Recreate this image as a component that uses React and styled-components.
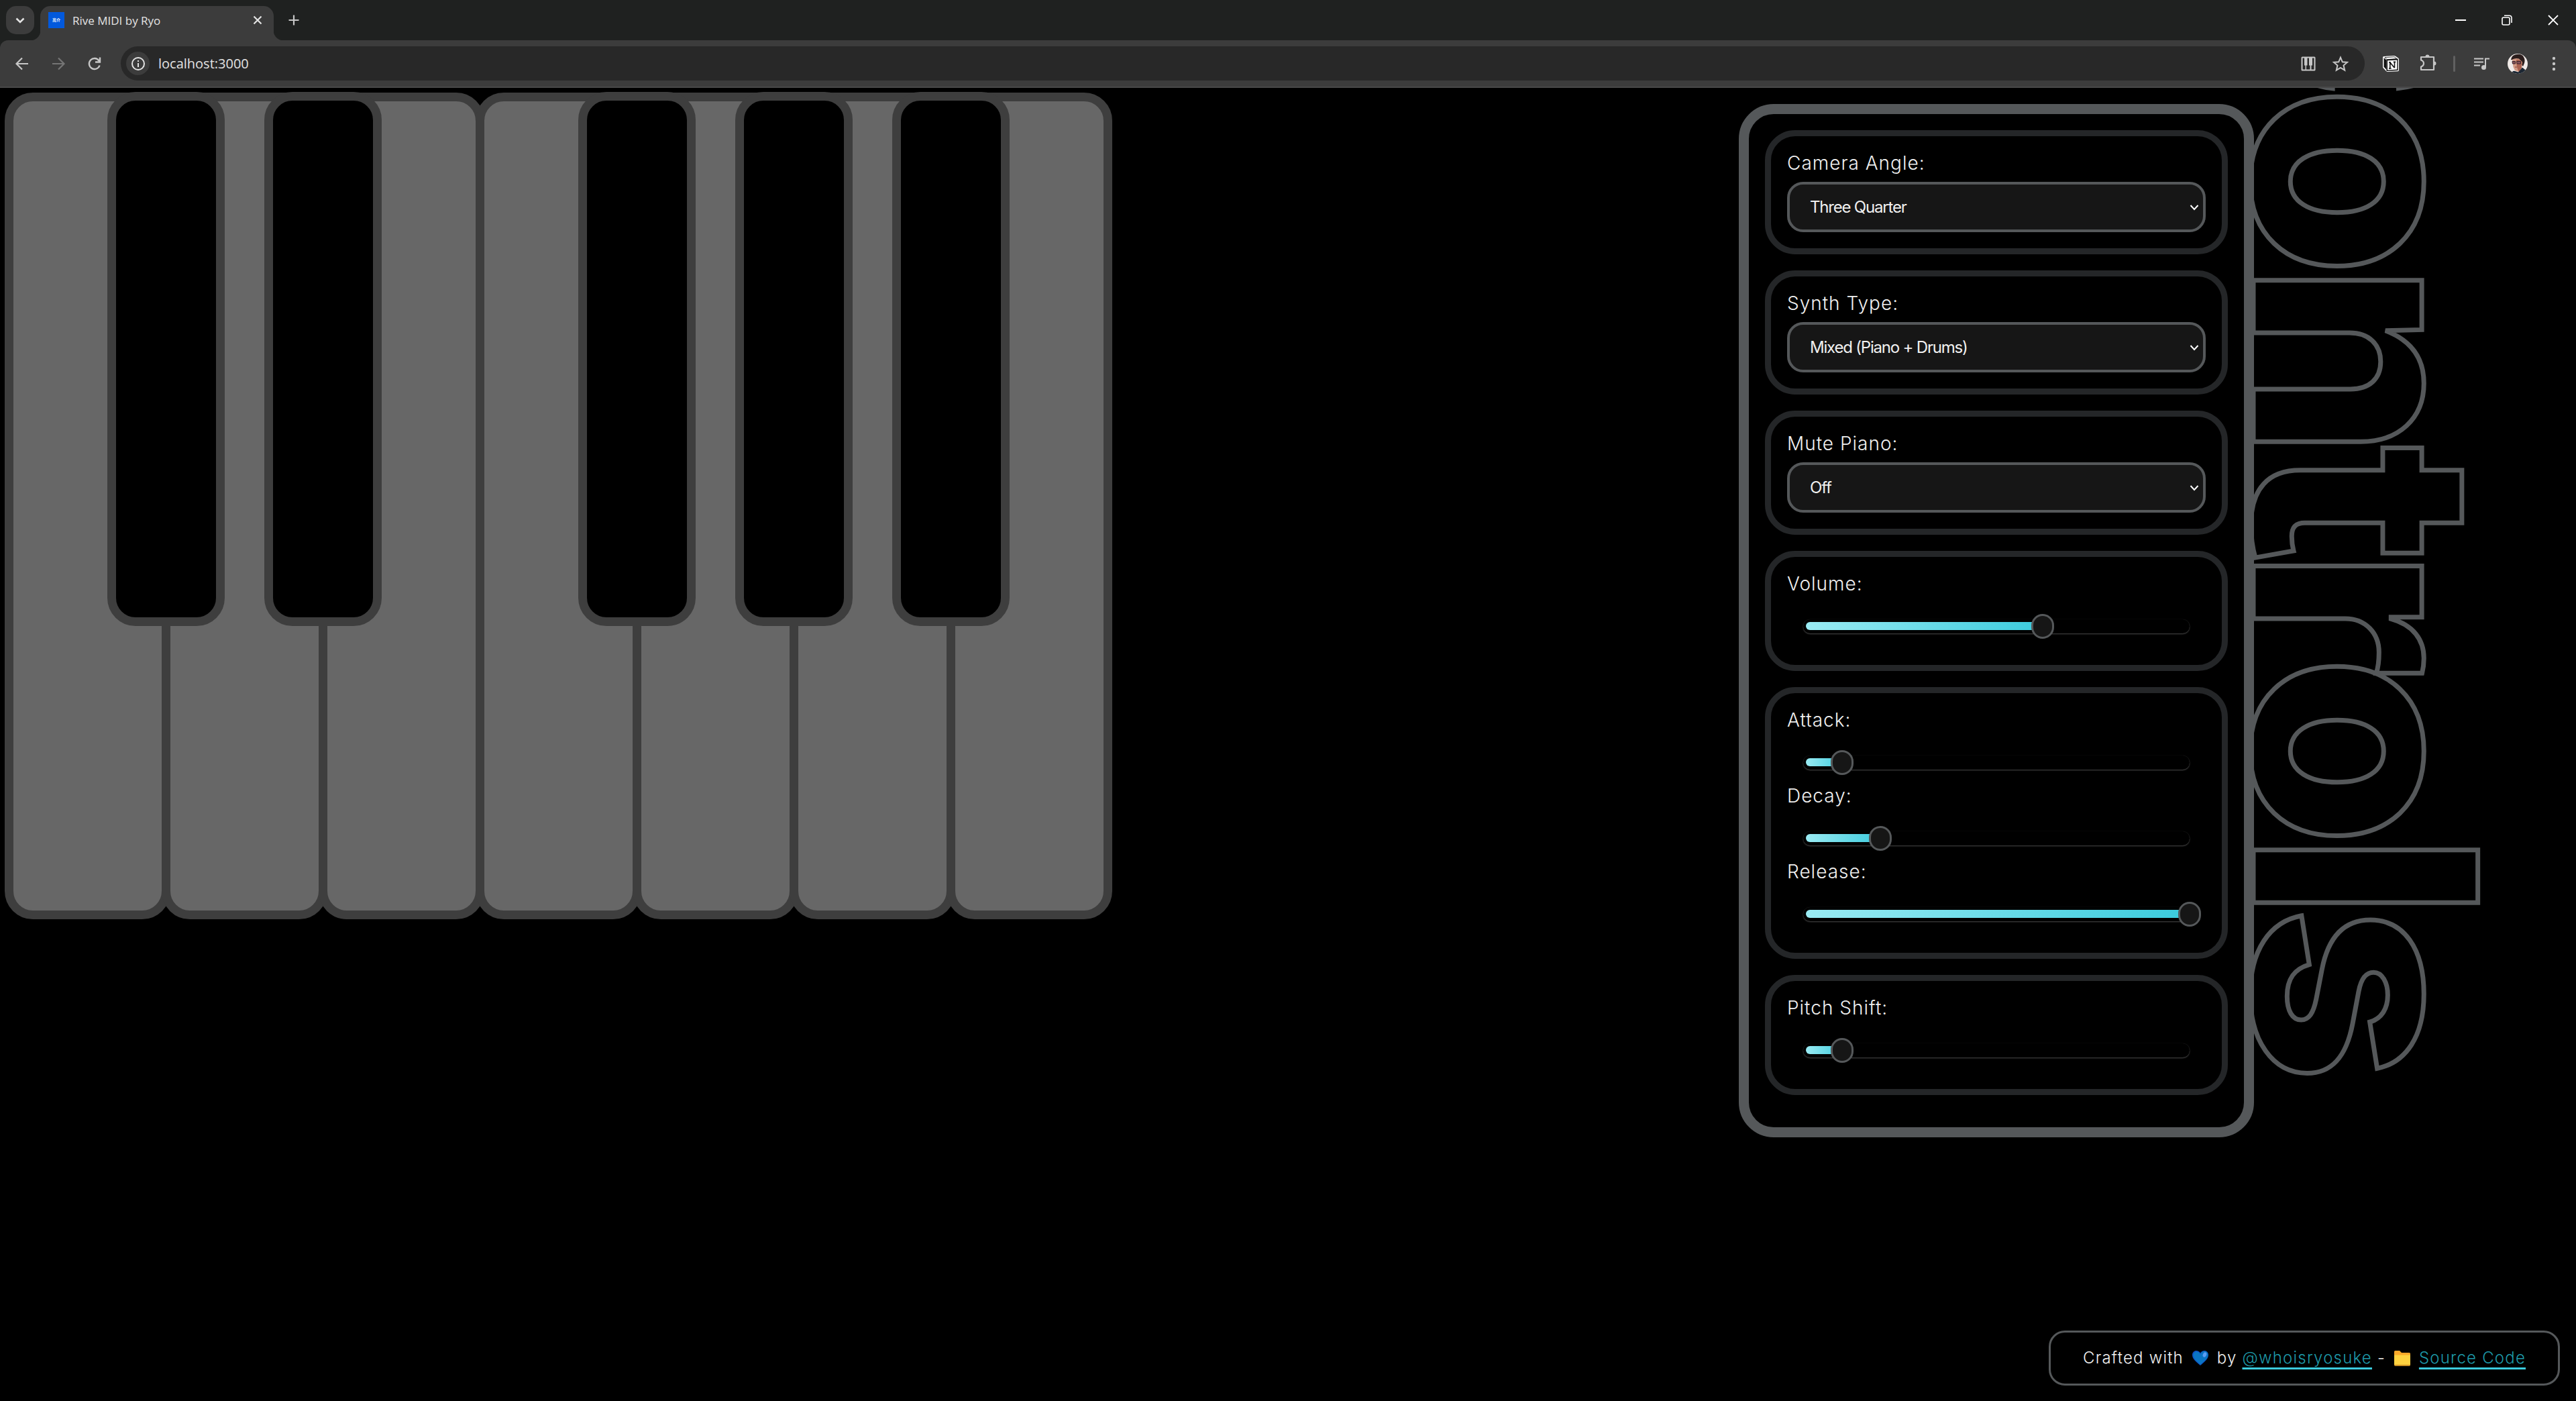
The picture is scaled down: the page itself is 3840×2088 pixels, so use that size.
import React, { useState } from "react";
import styled, { createGlobalStyle } from "styled-components";

const colors = {
  page: "#000000",
  steel: "#55585a",
  group: "#242628",
  field: "#161616",
  text: "#f0f0f0",
  link: "#1e9aaa",
  cyan: "#3bcbdd",
  keyLine: "#3e3e3e",
  keyWhite: "#676767",
  chromeDark: "#1f2120",
  chrome: "#3c3c3c",
  omnibox: "#282828",
  icon: "#c7c7c7",
};

const GlobalStyle = createGlobalStyle`
  *, *::before, *::after { box-sizing: border-box; }
  body {
    margin: 0;
    background: ${colors.page};
    color: ${colors.text};
    font-family: Inter, "Liberation Sans", sans-serif;
  }
  button { font: inherit; color: inherit; border: 0; padding: 0; background: none; }
  svg { display: block; overflow: visible; }
`;

const Window = styled.div`
  min-height: 100vh;
  display: flex;
  flex-direction: column;
`;

/* ---------- browser frame ---------- */

const TabStrip = styled.header`
  height: 60px;
  display: flex;
  align-items: flex-end;
  background: ${colors.chromeDark};
  color: #e3e3e3;
  font-family: "Open Sans", "Noto Sans", sans-serif;
`;

const TabSearch = styled.button`
  width: 42px;
  height: 42px;
  margin: 0 9px 9px;
  border-radius: 15px;
  background: ${colors.chrome};
  display: grid;
  place-items: center;
`;

const Tab = styled.div`
  position: relative;
  width: 348px;
  height: 51px;
  padding: 0 17px 9px 12px;
  display: flex;
  align-items: center;
  gap: 12px;
  background: ${colors.chrome};
  border-radius: 15px 15px 0 0;
  font-size: 17px;

  &::before,
  &::after {
    content: "";
    position: absolute;
    bottom: 0;
    width: 15px;
    height: 15px;
  }
  &::before {
    right: 100%;
    background: radial-gradient(circle at 0 0, transparent 15px, ${colors.chrome} 16px);
  }
  &::after {
    left: 100%;
    background: radial-gradient(circle at 100% 0, transparent 15px, ${colors.chrome} 16px);
  }
`;

const Favicon = styled.span`
  width: 24px;
  height: 24px;
  display: grid;
  place-items: center;
  background: #0259dd;
  color: #ffffff;
  font: 700 6px/1 "Noto Sans CJK JP", sans-serif;
`;

const TabTitle = styled.span`
  flex: 1;
`;

const IconButton = styled.button`
  width: ${(p) => p.$size || 24}px;
  height: ${(p) => p.$size || 24}px;
  display: grid;
  place-items: center;
  color: ${(p) => p.$color || colors.icon};
`;

const NewTab = styled(IconButton)`
  margin: 0 0 18px 18px;
`;

const WindowButtons = styled.div`
  margin-left: auto;
  height: 60px;
  display: flex;
`;

const WindowButton = styled.button`
  width: 69px;
  display: grid;
  place-items: center;
  color: #ffffff;
`;

const ToolbarBack = styled.div`
  background: ${colors.chromeDark};
`;

const Toolbar = styled.nav`
  height: 71px;
  padding: 9px 21px 9px 21px;
  display: flex;
  align-items: center;
  background: ${colors.chrome};
  border-bottom: 2px solid #484848;
  border-radius: 12px 12px 0 0;
  color: ${colors.icon};
`;

const NavButtons = styled.div`
  display: flex;
  gap: 30px;
  margin-right: 27px;
`;

const Omnibox = styled.div`
  flex: 1;
  height: 51px;
  padding: 0 24px 0 8px;
  display: flex;
  align-items: center;
  gap: 13px;
  border-radius: 26px;
  background: ${colors.omnibox};
`;

const SiteInfo = styled.button`
  width: 35px;
  height: 35px;
  border-radius: 50%;
  background: ${colors.chrome};
  color: #e3e3e3;
  display: grid;
  place-items: center;
`;

const Address = styled.input`
  flex: 1;
  border: 0;
  padding: 0;
  outline: 0;
  background: none;
  color: #e3e3e3;
  font: 20px "Open Sans", "Noto Sans", sans-serif;
`;

const OmniboxActions = styled.div`
  display: flex;
  gap: 24px;
`;

const Extensions = styled.div`
  display: flex;
  align-items: center;
  gap: 27px;
  margin-left: 27px;
`;

const Separator = styled.span`
  width: 3px;
  height: 24px;
  border-radius: 2px;
  background: #606060;
`;

/* ---------- page ---------- */

const Page = styled.main`
  flex: 1;
  display: grid;
  grid-template-columns: 1fr auto;
  grid-template-rows: 1fr auto;
  overflow: hidden;
`;

const Keyboard = styled.div`
  display: flex;
  align-items: flex-start;
  padding: 7px;
`;

const KeySlot = styled.div`
  position: relative;
  width: 247px;
  & + & {
    margin-left: -13px;
  }
`;

const WhiteKey = styled.button`
  display: block;
  width: 100%;
  height: 1232px;
  border: 13px solid ${colors.keyLine};
  border-radius: 42px;
  background: ${colors.keyWhite};
`;

const BlackKey = styled.button`
  position: absolute;
  z-index: 1;
  top: -1px;
  right: -81px;
  width: 175px;
  height: 796px;
  border: 13px solid ${colors.keyLine};
  border-radius: 42px;
  background: ${colors.page};
`;

const Side = styled.aside`
  display: flex;
  align-items: flex-start;
  height: 1600px;
`;

const Panel = styled.form`
  position: relative;
  z-index: 1;
  width: 768px;
  margin-top: 24px;
  padding: 24px 24px 48px;
  display: flex;
  flex-direction: column;
  gap: 24px;
  border: 15px solid ${colors.steel};
  border-radius: 52px;
  background: ${colors.page};
`;

const Title = styled.h1`
  margin: -324px 148px 0 0;
  writing-mode: vertical-rl;
  white-space: nowrap;
  font-size: 460px;
  line-height: 332px;
  font-weight: 800;
  letter-spacing: -21px;
  color: transparent;
  -webkit-text-stroke: 7px ${colors.steel};
`;

const Group = styled.div`
  padding: 24px;
  border: 9px solid ${colors.group};
  border-radius: 45px;
`;

const Label = styled.label`
  display: block;
  font-size: 28px;
  line-height: 33px;
  font-weight: 300;
  letter-spacing: 1px;
`;

const Select = styled.select`
  appearance: none;
  display: block;
  width: 100%;
  height: 75px;
  padding: 0 30px;
  border: 4px solid ${colors.steel};
  border-radius: 24px;
  background: none;
  color: ${colors.text};
  font: 400 24px Inter, "Liberation Sans", sans-serif;
  letter-spacing: -0.05em;
  grid-area: 1 / 1;
`;

const SelectBox = styled.div`
  display: grid;
  align-items: center;
  margin-top: 11px;
  border-radius: 24px;
  background: ${colors.field};
  color: #ffffff;

  svg {
    grid-area: 1 / 1;
    justify-self: end;
    margin-right: 9px;
    pointer-events: none;
  }
`;

const SliderField = styled.div`
  display: flex;
  flex-direction: column;
  gap: 25px;
  padding-bottom: 13px;
`;

const SliderBox = styled.div`
  height: 42px;
  display: grid;
  align-items: center;
  padding: 0 7px;
`;

const Track = styled.div`
  grid-area: 1 / 1;
  height: 21px;
  margin: 0 17px;
  padding: 4px;
  border-radius: 11px;
  background: ${colors.page};
  box-shadow: 0 1px 2px #4a4a4a, 0 0 1px #222222;
`;

const Fill = styled.div`
  height: 12px;
  border-radius: 6px;
  background: linear-gradient(90deg, #9aebf3, ${colors.cyan});
`;

const Range = styled.input`
  grid-area: 1 / 1;
  z-index: 1;
  appearance: none;
  width: 100%;
  height: 37px;
  margin: 0;
  background: none;

  &::-webkit-slider-thumb {
    appearance: none;
    width: 34px;
    height: 37px;
    border: 3px solid ${colors.steel};
    border-radius: 17px;
    background: ${colors.field};
  }
`;

const Footer = styled.footer`
  grid-column: 1 / -1;
  justify-self: end;
  display: flex;
  align-items: center;
  height: 82px;
  margin: 0 24px 23px;
  padding: 0 48px;
  border: 3px solid ${colors.steel};
  border-radius: 24px;
  font-size: 24px;
  line-height: 30px;
  font-weight: 300;
  letter-spacing: 0.05em;
  white-space: pre;

  svg {
    margin: 0 5px;
  }
`;

const FooterLink = styled.a`
  color: ${colors.link};
  text-decoration: underline 3px ${colors.cyan};
  text-decoration-skip-ink: none;
  text-underline-offset: 6px;
`;

/* ---------- icons ---------- */

const Stroke = ({ size = 24, box = 24, width = 2, children, ...rest }) => (
  <svg width={size} height={size} viewBox={`0 0 ${box} ${box}`} fill="none" stroke="currentColor" strokeWidth={width} {...rest}>
    {children}
  </svg>
);

const NotionIcon = () => (
  <svg width="24" height="24" viewBox="0 0 24 24">
    <path d="M1.500 1 16.500 0Q18 0 19 .7l4 2.800q1 .7 1 1.700V21.500q0 1.600-1.600 1.700L7 24q-1.200 0-2-.9L.8 18.500Q0 17.400 0 16.200V2.800Q0 1.100 1.500 1z" fill="#fff" />
    <path d="M3 2.600 17 1.700 21 4.600 6.200 5.700z" fill="#fff" stroke="#111" strokeWidth="0.800" />
    <path d="M1.500 3.200 5.500 6.500v14.500L1.500 16.500z" fill="#111" />
    <path d="M5.500 5.500 22.700 4.500V22L5.500 23zM7 7.300V21.400L21.300 20.600V6.400z" fill="#111" fillRule="evenodd" />
    <path d="M10.800 18.700V10M11 10.200l6.300 7.800M17.500 18.300V9.500M9 9.800h2.800M9 18.900h3.600M15.800 9.400h3.400" fill="none" stroke="#111" strokeWidth="1.600" />
  </svg>
);

const Avatar = () => (
  <svg width="30" height="30" viewBox="0 0 30 30">
    <defs>
      <clipPath id="avatar">
        <circle cx="15" cy="15" r="15" />
      </clipPath>
    </defs>
    <g clipPath="url(#avatar)">
      <rect width="30" height="30" fill="#f1ebe8" />
      <path d="M5 9Q6 2.500 12 1.200 21-.5 24 5q2.500 4 1 9l-2 5-8-9z" fill="#2b1d1c" />
      <path d="M7 8.500q5-2.500 10-1l5 5-1 9-3 6-7-2.500-2.500-5z" fill="#d29a84" />
      <path d="M13 9q5-1 8 3v9l-4 6q-4-6-4-18z" fill="#a9614f" />
      <path d="M7 11.500h4.500v3.500H7.500zM13.500 11.500h6v3.500h-5.500z" fill="#86525a" stroke="#3a2328" strokeWidth="1" />
      <path d="M11 20h3" stroke="#7c3f3c" strokeWidth="1.200" />
      <path d="M6 30q1-5 5-4l5 1.500 6-7 6 5v6H6z" fill="#1c2733" />
    </g>
  </svg>
);

const Heart = () => (
  <svg width="24" height="22" viewBox="0 0 24 22" aria-label="love" role="img">
    <path d="M12 22C6 17 0 12.500 0 6.500 0 2.500 2.800 0 6 0c2.600 0 4.700 1.200 6 3.500C13.300 1.200 15.400 0 18 0c3.200 0 6 2.500 6 6.500C24 12.500 18 17 12 22z" fill="#0f4fc4" />
    <path d="M12 21C8 17 1.500 12 1.500 7c0-3 2.200-5.500 4.700-5.500 2.800 0 4.800 1.500 5.800 4 1.500-2.800 3.600-4.700 6.400-4.700C21.500.8 23.500 3 23.500 6.500 23.500 12 16 17 12 21z" fill="#0a74c4" />
    <ellipse cx="18.500" cy="6" rx="2.600" ry="3.800" fill="#5b9cf5" transform="rotate(22 18.500 6)" />
  </svg>
);

const Folder = () => (
  <svg width="24" height="23" viewBox="0 0 24 23" aria-label="folder" role="img">
    <path d="M0 1.500Q0 0 1.500 0H8l3 3h11.500Q24 3 24 4.500V10H0z" fill="#fba829" />
    <path d="M0 6.500h24v14q0 1.500-1.500 1.500h-21Q0 22 0 20.500z" fill="#ffd23f" />
    <path d="M0 21h24q0 2-1.500 2h-21Q0 23 0 21z" fill="#c98d22" />
  </svg>
);

/* ---------- data ---------- */

const keys = [
  { note: "C", sharp: true },
  { note: "D", sharp: true },
  { note: "E" },
  { note: "F", sharp: true },
  { note: "G", sharp: true },
  { note: "A", sharp: true },
  { note: "B" },
];

function SelectField({ id, label, options }) {
  return (
    <Group>
      <Label htmlFor={id}>{label}</Label>
      <SelectBox>
        <Select id={id}>
          {options.map((o) => (
            <option key={o}>{o}</option>
          ))}
        </Select>
        <Stroke size={16} box={16} width={2}>
          <path d="M2.500 5 8 11l5.500-6" />
        </Stroke>
      </SelectBox>
    </Group>
  );
}

function Slider({ id, label, initial }) {
  const [value, setValue] = useState(initial);
  return (
    <SliderField>
      <Label htmlFor={id}>{label}</Label>
      <SliderBox>
        <Track>
          <Fill style={{ width: `${value}%` }} />
        </Track>
        <Range id={id} type="range" min="0" max="100" value={value} onChange={(e) => setValue(Number(e.target.value))} />
      </SliderBox>
    </SliderField>
  );
}

export default function App() {
  return (
    <Window>
      <GlobalStyle />
      <TabStrip>
        <TabSearch aria-label="Search tabs">
          <Stroke size={24} width={2.600}>
            <path d="m6.500 9.500 5.500 5.500 5.500-5.500" />
          </Stroke>
        </TabSearch>
        <Tab>
          <Favicon>亮介</Favicon>
          <TabTitle>Rive MIDI by Ryo</TabTitle>
          <IconButton $size={14} $color="#e3e3e3" aria-label="Close tab">
            <Stroke size={14} box={14} width={2.200}>
              <path d="m1.500 1.500 11 11M12.500 1.500l-11 11" />
            </Stroke>
          </IconButton>
        </Tab>
        <NewTab aria-label="New tab">
          <Stroke size={24} width={2.200}>
            <path d="M12 4.500v15M4.500 12h15" />
          </Stroke>
        </NewTab>
        <WindowButtons>
          <WindowButton aria-label="Minimize">
            <Stroke size={16} box={16} width={2}>
              <path d="M0 8h16" />
            </Stroke>
          </WindowButton>
          <WindowButton aria-label="Restore">
            <Stroke size={16} box={16} width={1.600}>
              <rect x="1" y="4" width="11" height="11" rx="2" />
              <path d="M4 1.200h7.500q3.500 0 3.500 3.500V12" />
            </Stroke>
          </WindowButton>
          <WindowButton aria-label="Close">
            <Stroke size={16} box={16} width={1.800}>
              <path d="m1 1 14 14M15 1 1 15" />
            </Stroke>
          </WindowButton>
        </WindowButtons>
      </TabStrip>
      <ToolbarBack>
        <Toolbar>
          <NavButtons>
            <IconButton aria-label="Back">
              <Stroke width={2.200}>
                <path d="M21 12H4.500M12 3.500 3.500 12l8.500 8.500" />
              </Stroke>
            </IconButton>
            <IconButton aria-label="Forward" $color="#757575">
              <Stroke width={2.200}>
                <path d="M3 12h16.500M12 3.500l8.500 8.500-8.500 8.500" />
              </Stroke>
            </IconButton>
            <IconButton aria-label="Reload">
              <Stroke width={2.400}>
                <path d="M19.500 14.500A8 8 0 1 1 18.500 7.500L20 9.500" />
                <path d="M20 2.500v7h-7" />
              </Stroke>
            </IconButton>
          </NavButtons>
          <Omnibox>
            <SiteInfo aria-label="Site information">
              <Stroke size={20} box={20} width={2}>
                <circle cx="10" cy="10" r="9" />
                <path d="M10 9v6M10 5v2" />
              </Stroke>
            </SiteInfo>
            <Address aria-label="Address" defaultValue="localhost:3000" />
            <OmniboxActions>
              <IconButton aria-label="MIDI devices">
                <svg width="24" height="24" viewBox="0 0 24 24">
                  <path d="M3 1.500h18q1.500 0 1.500 1.500v18q0 1.500-1.500 1.500H3q-1.500 0-1.500-1.500V3q0-1.500 1.500-1.500zM3.500 3.500v17h4v-6H6v-11zm5.500 17h5.500v-6h-1.500v-11h-2.500v11H9zm7.500 0h4v-17H18v11h-1.500z" fill="currentColor" fillRule="evenodd" />
                </svg>
              </IconButton>
              <IconButton aria-label="Bookmark">
                <Stroke width={2}>
                  <path d="m12 2.600 2.800 6.700 7.200.6-5.500 4.700 1.700 7L12 17.900l-6.200 3.700 1.700-7L2 9.900l7.200-.6z" />
                </Stroke>
              </IconButton>
            </OmniboxActions>
          </Omnibox>
          <Extensions>
            <IconButton aria-label="Notion">
              <NotionIcon />
            </IconButton>
            <IconButton $size={27} aria-label="Extensions">
              <Stroke size={27} box={27} width={2.200}>
                <path d="M6 4h19v19H6v-4.500q4-1.500 4-5T6 8.500z" strokeLinejoin="round" />
                <path d="M12.500 3.500a3 3 0 0 1 6 0zM25.500 10.500a3 3 0 0 1 0 6z" fill="currentColor" stroke="none" />
              </Stroke>
            </IconButton>
            <Separator />
            <IconButton aria-label="Media controls">
              <Stroke width={2}>
                <path d="M1 4.500h14M1 9.500h14M1 14.500h9M18 17V4.500h6" />
                <circle cx="15.500" cy="17.500" r="3.500" fill="currentColor" stroke="none" />
              </Stroke>
            </IconButton>
            <IconButton $size={30} aria-label="Profile">
              <Avatar />
            </IconButton>
            <IconButton aria-label="Menu">
              <svg width="24" height="24" viewBox="0 0 24 24" fill="currentColor">
                <circle cx="12" cy="4" r="2.200" />
                <circle cx="12" cy="12" r="2.200" />
                <circle cx="12" cy="20" r="2.200" />
              </svg>
            </IconButton>
          </Extensions>
        </Toolbar>
      </ToolbarBack>
      <Page>
        <Keyboard>
          {keys.map((k) => (
            <KeySlot key={k.note}>
              <WhiteKey aria-label={k.note} />
              {k.sharp && <BlackKey aria-label={`${k.note} sharp`} />}
            </KeySlot>
          ))}
        </Keyboard>
        <Side>
          <Panel>
            <SelectField id="camera" label="Camera Angle:" options={["Three Quarter"]} />
            <SelectField id="synth" label="Synth Type:" options={["Mixed (Piano + Drums)"]} />
            <SelectField id="mute" label="Mute Piano:" options={["Off", "On"]} />
            <Group>
              <Slider id="volume" label="Volume:" initial={62} />
            </Group>
            <Group>
              <Slider id="attack" label="Attack:" initial={10} />
              <Slider id="decay" label="Decay:" initial={20} />
              <Slider id="release" label="Release:" initial={100} />
            </Group>
            <Group>
              <Slider id="pitch" label="Pitch Shift:" initial={10} />
            </Group>
          </Panel>
          <Title>Controls</Title>
        </Side>
        <Footer>
          <span>Crafted with </span>
          <Heart />
          <span> by </span>
          <FooterLink href="#author">@whoisryosuke</FooterLink>
          <span> - </span>
          <Folder />
          <span> </span>
          <FooterLink href="#source">Source Code</FooterLink>
        </Footer>
      </Page>
    </Window>
  );
}
